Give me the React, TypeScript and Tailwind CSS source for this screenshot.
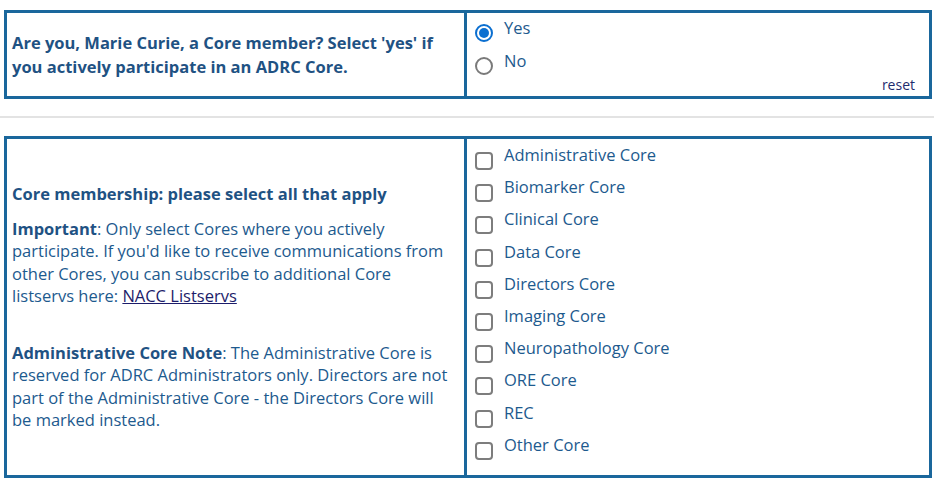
import { useState } from "react";

const cores = [
  "Administrative Core",
  "Biomarker Core",
  "Clinical Core",
  "Data Core",
  "Directors Core",
  "Imaging Core",
  "Neuropathology Core",
  "ORE Core",
  "REC",
  "Other Core",
];

function Radio({ checked }: { checked: boolean }) {
  return checked ? (
    <span className="block w-[18px] h-[18px] rounded-full border-2 border-[#0b6fd0] flex items-center justify-center shrink-0">
      <span className="block w-[10px] h-[10px] rounded-full bg-[#0b6fd0]" />
    </span>
  ) : (
    <span className="block w-[18px] h-[18px] rounded-full border-2 border-[#7a7a7a] shrink-0" />
  );
}

function Box() {
  return <span className="block w-[18px] h-[18px] rounded-[4px] border-2 border-[#7d7d7d] shrink-0" />;
}

export default function App() {
  const [answer] = useState("yes");

  return (
    <div className="w-[938px] h-[484px] bg-white pt-[10px] pl-[4px] text-[#1d5a8e] font-['Open_Sans',sans-serif]">
      {/* member question */}
      <div className="w-[928px] h-[89px] border-[3px] border-[#1a679c] grid grid-cols-[460px_1fr]">
        <div className="border-r-[3px] border-[#1a679c] flex items-center pl-[5px] pr-2 pt-[1px]">
          <p className="text-[16.5px] leading-[24px] font-bold text-[#1f5283]">
            Are you, Marie Curie, a Core member? Select 'yes' if you actively participate in an ADRC Core.
          </p>
        </div>
        <div className="relative pl-[8px] pt-[4px]">
          <div className="flex gap-[11px] h-[26px]">
            <span className="pt-[7px]"><Radio checked={answer === "yes"} /></span>
            <span className="text-[16.5px] leading-[22px]">Yes</span>
          </div>
          <div className="flex gap-[11px] h-[26px] mt-[7px]">
            <span className="pt-[7px]"><Radio checked={answer === "no"} /></span>
            <span className="text-[16.5px] leading-[22px]">No</span>
          </div>
          <span className="absolute right-[14px] bottom-[1px] text-[14px] text-[#1e2c6e]">reset</span>
        </div>
      </div>

      <div className="h-[2px] w-[934px] -ml-[4px] bg-[#e3e3e3] mt-[17px]" />

      {/* core membership */}
      <div className="w-[928px] h-[342px] mt-[18px] border-[3px] border-[#1a679c] grid grid-cols-[460px_1fr]">
        <div className="border-r-[3px] border-[#1a679c] flex flex-col justify-center pl-[5px] pr-2 text-[16.5px] leading-[22.5px] pt-[1px]">
          <p className="font-bold text-[#1f5283] mb-[12px]">Core membership: please select all that apply</p>
          <p>
            <b className="text-[#1f5283]">Important</b>: Only select Cores where you actively participate. If you'd like to
            receive communications from other Cores, you can subscribe to additional Core listservs here:{" "}
            <a className="underline text-[#1c1c6a]">NACC Listservs</a>
          </p>
          <p className="mt-[34px]">
            <b className="text-[#1f5283]">Administrative Core Note</b>: The Administrative Core is reserved for ADRC
            Administrators only. Directors are not part of the Administrative Core - the Directors Core will be
            marked instead.
          </p>
        </div>
        <div className="pl-[8px] pt-[4px] flex flex-col">
          {cores.map((c) => (
            <label key={c} className="flex gap-[11px] h-[32.2px]">
              <span className="pt-[9px]"><Box /></span>
              <span className="text-[16.5px] leading-[24px]">{c}</span>
            </label>
          ))}
        </div>
      </div>
    </div>
  );
}
